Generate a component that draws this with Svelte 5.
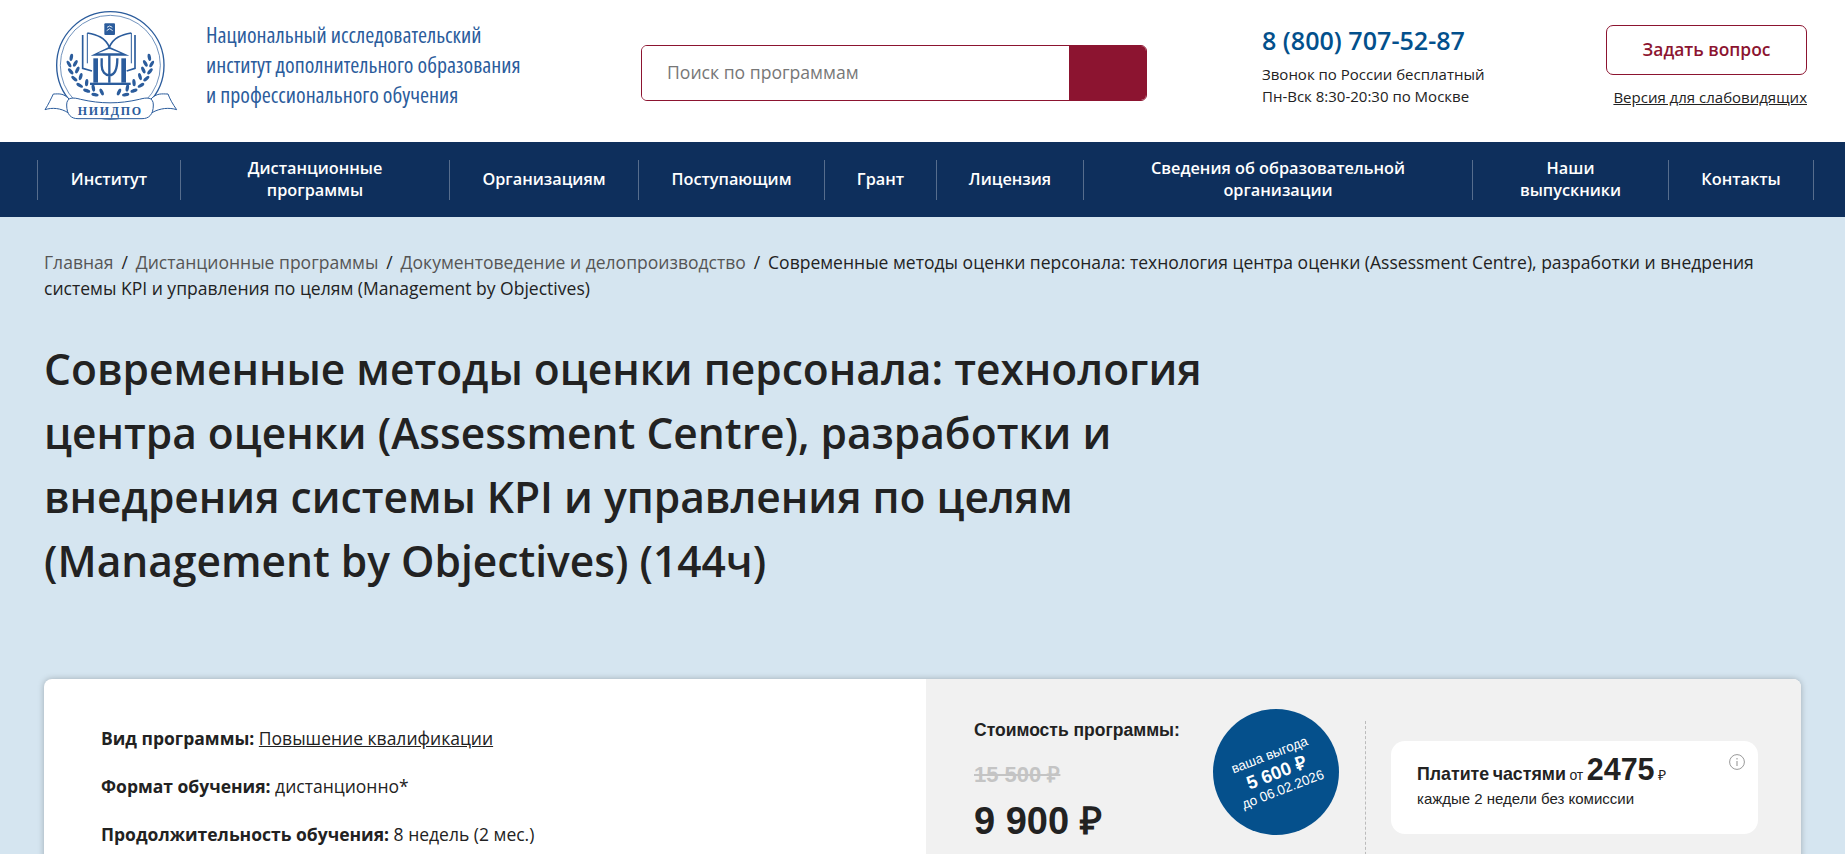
<script>
  const navItems = [
    ['Институт'],
    ['Дистанционные', 'программы'],
    ['Организациям'],
    ['Поступающим'],
    ['Грант'],
    ['Лицензия'],
    ['Сведения об образовательной', 'организации'],
    ['Наши', 'выпускники'],
    ['Контакты'],
  ];

  // laurel leaves for the left branch, mirrored for the right one
  const leaves = [
    [124, 172, 10], [117, 192, -30], [136, 190, 30], [122, 214, -40], [142, 210, 25],
    [133, 236, -50], [152, 230, 15], [149, 256, -60], [170, 248, 5], [170, 272, -70],
    [190, 264, -10], [195, 284, -80], [215, 276, -25],
  ];
</script>

<div class="page">
  <header class="top">
    <a class="logo" href="#top" aria-label="НИИДПО">
      <svg viewBox="0 0 480 375" width="160" height="125">
        <g fill="none" stroke="#2b5c9c">
          <circle cx="241" cy="196" r="161" stroke-width="4" />
          <circle cx="241" cy="196" r="150" stroke-width="2" />
          <path d="M158 105V205L186 213M172 99C200 104 226 112 238 142C250 112 276 104 304 99M315 105V205L290 213" stroke-width="5" />
          <path d="M172 99V190M304 99V190" stroke-width="3" />
          <path d="M215 175V196C215 216 226 226 238 226C250 226 262 216 262 175M238 165V248" stroke-width="7" />
        </g>
        <g fill="#2b5c9c">
          <rect x="223" y="70" width="32" height="35" rx="3" />
          <path d="M182 167L238 140L298 167ZM204 160H272L238 146Z" fill-rule="evenodd" />
          <rect x="190" y="175" width="14" height="73" />
          <rect x="274" y="175" width="14" height="73" />
          <rect x="180" y="248" width="122" height="7" />
          {#each leaves as [x, y, r]}
            <ellipse cx={x} cy={y} rx="5" ry="11" transform="rotate({r} {x} {y})" />
            <ellipse cx={482 - x} cy={y} rx="5" ry="11" transform="rotate({-r} {482 - x} {y})" />
          {/each}
        </g>
        <path d="M231 82L239 78L247 82M230 92L239 86L248 92" fill="none" stroke="#dfe8f3" stroke-width="3" />
        <g fill="#fff" stroke="#2b5c9c" stroke-width="3">
          <path d="M118 298C100 278 86 282 70 282C62 298 56 312 45 329C66 322 92 324 114 338Z" />
          <path d="M362 298C380 278 396 282 414 282C420 298 428 312 440 329C418 322 390 324 366 338Z" />
          <path d="M110 315C110 290 130 292 152 298C212 312 268 312 328 298C350 292 370 290 370 315C370 345 356 356 336 356H144C124 356 110 345 110 315Z" />
        </g>
        <text class="logo-name" x="241" y="344" text-anchor="middle">НИИДПО</text>
      </svg>
    </a>

    <div class="org">
      <span>Национальный исследовательский</span>
      <span>институт дополнительного образования</span>
      <span>и профессионального обучения</span>
    </div>

    <form class="search">
      <input type="text" placeholder="Поиск по программам" />
      <button type="button" aria-label="Поиск"></button>
    </form>

    <div class="contacts">
      <a class="phone" href="#top">8 (800) 707-52-87</a>
      <p>Звонок по России бесплатный<br />Пн-Вск 8:30-20:30 по Москве</p>
    </div>

    <div class="actions">
      <button type="button" class="ask">Задать вопрос</button>
      <a class="eye" href="#top">Версия для слабовидящих</a>
    </div>
  </header>

  <nav class="menu">
    {#each navItems as lines}
      <a href="#top">
        {#each lines as line}<span>{line}</span>{/each}
      </a>
    {/each}
  </nav>

  <main class="content">
    <div class="crumbs">
      <a href="#top">Главная</a> <i>/</i> <a href="#top">Дистанционные программы</a> <i>/</i> <a href="#top">Документоведение и делопроизводство</a> <i>/</i> Современные методы оценки персонала: технология центра оценки (Assessment Centre), разработки и внедрения системы KPI и управления по целям (Management by Objectives)
    </div>

    <h1>Современные методы оценки персонала: технология центра оценки (Assessment Centre), разработки и внедрения системы KPI и управления по целям (Management by Objectives) (144ч)</h1>

    <section class="card">
      <div class="info">
        <p><b>Вид программы:</b> <a href="#top">Повышение квалификации</a></p>
        <p><b>Формат обучения:</b> дистанционно*</p>
        <p><b>Продолжительность обучения:</b> 8 недель (2 мес.)</p>
      </div>

      <aside class="buy">
        <div class="price">
          <div class="price-label">Стоимость программы:</div>
          <div class="price-old">15 500 ₽</div>
          <div class="price-new">9 900 ₽</div>
        </div>
        <div class="badge">
          <div class="badge-text">
            <span>ваша выгода</span>
            <b>5 600 ₽</b>
            <span>до 06.02.2026</span>
          </div>
        </div>
        <div class="split">
          <div class="parts">
            <div class="parts-head"><b>Платите частями</b> <small>от</small> <strong>2475</strong> <small>₽</small></div>
            <div class="parts-note">каждые 2 недели без комиссии</div>
            <svg class="info-icon" viewBox="0 0 16 16" width="16" height="16">
              <circle cx="8" cy="8" r="7.4" fill="none" stroke="#999" />
              <path d="M8 7V12M8 4V5.4" stroke="#999" stroke-width="1.1" />
            </svg>
          </div>
        </div>
      </aside>
    </section>
  </main>
</div>

<style>
  :global(body) {
    margin: 0;
    font-family: 'Open Sans', 'Noto Sans', sans-serif;
    color: #222;
  }

  .page {
    height: 854px;
    overflow: hidden;
    background: #d5e5f0;
  }

  .top {
    display: flex;
    height: 142px;
    background: #fff;
  }

  .logo {
    display: block;
    flex: none;
    width: 160px;
    height: 125px;
    margin-left: 30px;
  }

  .logo svg {
    display: block;
  }

  .logo-name {
    font-family: 'Liberation Serif', serif;
    font-weight: 700;
    font-size: 36px;
    letter-spacing: 5px;
    fill: #2b5c9c;
  }

  .org {
    flex: none;
    width: 435px;
    margin: 20px 0 0 16px;
    color: #2b5c9c;
    font-size: 21.9px;
    line-height: 30px;
    font-stretch: 75%;
  }

  .org span {
    display: block;
    white-space: nowrap;
  }

  .search {
    display: flex;
    flex: none;
    width: 506px;
    height: 56px;
    margin: 45px 0 0 0;
    box-sizing: border-box;
    border: 1px solid #8c1430;
    border-radius: 6px;
    overflow: hidden;
  }

  .search input {
    flex: 1;
    min-width: 0;
    padding: 0 0 2px 25px;
    border: 0;
    outline: 0;
    font: 400 17.6px 'Open Sans', sans-serif;
  }

  .search input::placeholder {
    color: #777;
    opacity: 1;
  }

  .search button {
    flex: none;
    width: 77px;
    border: 0;
    background: #8c1430;
  }

  .contacts {
    flex: none;
    width: 344px;
    margin: 24px 0 0 115px;
  }

  .phone {
    display: block;
    color: #03508c;
    font-size: 25.1px;
    font-weight: 600;
    line-height: 32px;
    text-decoration: none;
  }

  .contacts p {
    margin: 7px 0 0;
    font-size: 15px;
    line-height: 22px;
  }

  .actions {
    display: flex;
    flex-direction: column;
    align-items: flex-end;
    flex: none;
    width: 201px;
    margin-top: 25px;
  }

  .ask {
    width: 201px;
    height: 50px;
    padding-bottom: 3px;
    box-sizing: border-box;
    border: 1px solid #8c1430;
    border-radius: 7px;
    background: #fff;
    color: #8c1430;
    font: 600 17.4px 'Open Sans', sans-serif;
  }

  .eye {
    margin-top: 11px;
    color: #222;
    font-size: 15px;
    line-height: 22px;
    white-space: nowrap;
  }

  .menu {
    display: grid;
    grid-template-columns: 143px 269px 189px 186px 112px 147px 389px 196px 146px;
    align-items: center;
    height: 75px;
    padding-left: 37px;
    background: #0e2f5c;
  }

  .menu a {
    display: flex;
    flex-direction: column;
    justify-content: center;
    align-items: center;
    height: 40px;
    padding-bottom: 1px;
    box-sizing: border-box;
    border-left: 1px solid rgba(255, 255, 255, 0.3);
    color: #fff;
    font-size: 16.3px;
    font-weight: 600;
    line-height: 22px;
    text-decoration: none;
    white-space: nowrap;
  }

  .menu a:last-child {
    border-right: 1px solid rgba(255, 255, 255, 0.3);
  }

  .content {
    padding: 32px 44px 0;
  }

  .crumbs {
    font-size: 17.55px;
    line-height: 26px;
    color: #222;
  }

  .crumbs a {
    color: #555;
    text-decoration: none;
  }

  .crumbs i {
    margin: 0 3.3px;
    font-style: normal;
  }

  h1 {
    width: 1240px;
    margin: 36px 0 0;
    color: #222;
    font-size: 42.5px;
    font-weight: 600;
    line-height: 64px;
  }

  .card {
    display: grid;
    grid-template-columns: 882px 1fr;
    min-height: 300px;
    margin-top: 86px;
    border-radius: 8px;
    overflow: hidden;
    box-shadow: 0 0 6px rgba(0, 0, 0, 0.25);
    background: #fff;
  }

  .info {
    padding: 47px 57px;
    font-size: 17.5px;
    line-height: 24px;
  }

  .info p {
    margin: 0 0 24px;
  }

  .info a {
    color: #222;
  }

  .buy {
    display: flex;
    align-items: flex-start;
    padding-left: 48px;
    background: #f1f1f1;
    font-family: 'Liberation Sans', Arial, sans-serif;
    color: #222;
  }

  .price {
    flex: none;
    width: 239px;
    padding-top: 39px;
  }

  .price-label {
    font-size: 17.5px;
    font-weight: 700;
    line-height: 24px;
  }

  .price-old {
    margin-top: 20px;
    color: #c4c4c4;
    font-size: 22px;
    font-weight: 700;
    line-height: 26px;
    text-decoration: line-through;
  }

  .price-new {
    margin-top: 12px;
    font-size: 38px;
    font-weight: 700;
    line-height: 42px;
  }

  .badge {
    display: flex;
    align-items: center;
    justify-content: center;
    flex: none;
    width: 126px;
    height: 126px;
    margin-top: 30px;
    border-radius: 50%;
    background: #05508c;
    color: #fff;
  }

  .badge-text {
    display: flex;
    flex-direction: column;
    align-items: center;
    transform: rotate(-21deg);
    font-size: 13.5px;
    line-height: 18px;
    white-space: nowrap;
  }

  .badge-text b {
    font-size: 18.5px;
    line-height: 19px;
  }

  .split {
    flex: none;
    width: 393px;
    height: 300px;
    margin: 42px 0 0 26px;
    padding: 20px 0 0 25px;
    box-sizing: border-box;
    border-left: 1px dashed #bbb;
  }

  .parts {
    position: relative;
    width: 367px;
    height: 93px;
    padding: 11px 26px 0;
    box-sizing: border-box;
    border-radius: 14px;
    background: #fff;
    font-size: 17.8px;
    line-height: 34px;
    white-space: nowrap;
  }

  .parts-head {
    word-spacing: -1.5px;
  }

  .parts small {
    font-size: 14px;
  }

  .parts strong {
    font-size: 30.5px;
  }

  .parts-note {
    margin-top: -3px;
    font-size: 15px;
    line-height: 20px;
  }

  .info-icon {
    position: absolute;
    top: 13px;
    right: 13px;
  }
</style>
